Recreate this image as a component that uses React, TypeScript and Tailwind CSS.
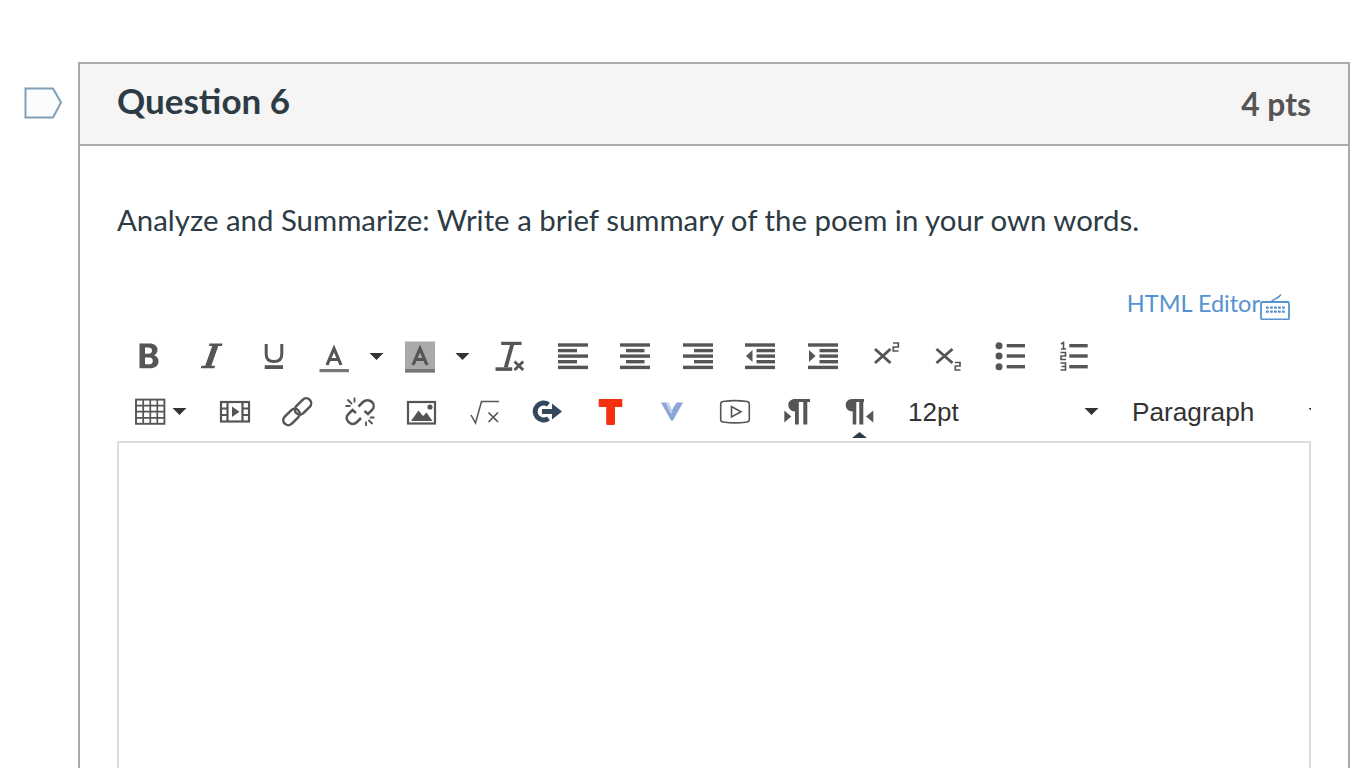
import type { ReactNode } from "react";

const G = "#555555";

function Ico({ children }: { children: ReactNode }) {
  return (
    <svg width="30" height="30" viewBox="0 0 30 30" fill="none" className="block overflow-visible shrink-0">
      {children}
    </svg>
  );
}

function Caret({ color = "#333333" }: { color?: string }) {
  return (
    <svg width="15" height="7" viewBox="0 0 15 7" className="block shrink-0">
      <path d="M0.5 0H14.5L7.5 7z" fill={color} />
    </svg>
  );
}

function Btn({ children, pointer }: { children: ReactNode; pointer?: boolean }) {
  return (
    <div className="relative flex w-[62.5px] shrink-0 items-center justify-center self-stretch">
      {children}
      {pointer && (
        <svg width="15" height="6" viewBox="0 0 15 6" className="absolute left-[23.5px] top-[47.5px] block">
          <path d="M7.5 0L15 6H0z" fill="#2d3b45" />
        </svg>
      )}
    </div>
  );
}

function ColorSplit({ children, wide }: { children: ReactNode; wide?: boolean }) {
  return (
    <div
      className={
        wide
          ? "flex w-[88px] shrink-0 items-center self-stretch pl-[13.5px]"
          : "flex w-[86.5px] shrink-0 items-center self-stretch pl-[14.5px]"
      }
    >
      {children}
      <div className="ml-[20px]">
        <Caret />
      </div>
    </div>
  );
}

function Bars({ rows }: { rows: [number, number][] }) {
  const ys = [2.3, 7.9, 13.4, 19, 24.7];
  return (
    <>
      {rows.map(([x, w], i) => (
        <rect key={i} x={x} y={ys[i]} width={w} height="3.4" fill={G} />
      ))}
    </>
  );
}

function ListDigit({ d }: { d: string }) {
  return <path d={d} stroke={G} strokeWidth="1.6" />;
}

function LetterA() {
  return <path d="M8 24L15 7.5L22 24M10.5 18.5H19.5" stroke={G} strokeWidth="3.2" />;
}

function Toolbar() {
  return (
    <div className="w-full overflow-hidden">
      <div className="flex h-[56px] items-center">
        <Btn>
          <Ico>
            <path
              fillRule="evenodd"
              d="M6.5 2.5H16.5C21.5 2.5 24.5 5 24.5 9C24.5 11.5 23 13.5 20.8 14.2C23.8 14.9 25.5 17.2 25.5 20.2C25.5 24.6 22 27.3 17 27.3H6.5zM12 6.5V12.8H15.5C17.7 12.8 19 11.7 19 9.6S17.7 6.5 15.5 6.5zM12 16.6V23.3H16C18.4 23.3 19.8 22.1 19.8 19.9S18.4 16.6 16 16.6z"
              fill={G}
            />
          </Ico>
        </Btn>
        <Btn>
          <Ico>
            <path d="M13.5 2.5H26.5L26 5H22.3L15.3 24.8H19L18.4 27.3H4.8L5.4 24.8H9.2L16.2 5H13z" fill={G} />
          </Ico>
        </Btn>
        <Btn>
          <Ico>
            <path d="M8.2 3V13C8.2 18 11 20.5 16 20.5S23.8 18 23.8 13V3" stroke={G} strokeWidth="3" />
            <rect x="6.7" y="24.2" width="18.3" height="3.8" fill={G} />
          </Ico>
        </Btn>
        <ColorSplit>
          <Ico>
            <LetterA />
            <rect x="0.5" y="28" width="29.5" height="3.2" fill="#777777" />
          </Ico>
        </ColorSplit>
        <ColorSplit wide>
          <Ico>
            <rect x="0" y="0.5" width="30" height="31" fill="#aaaaaa" />
            <rect x="0" y="28" width="30" height="3.5" fill="#777777" />
            <LetterA />
          </Ico>
        </ColorSplit>
        <Btn>
          <Ico>
            <path d="M6.2 0.7H26.5V4H6.2zM15 4H19L12.8 26.3H8.8z" fill={G} />
            <rect x="0.5" y="26.3" width="16.7" height="3.6" fill={G} />
            <path d="M19.5 20.4L28.2 29M28.2 20.4L19.5 29" stroke={G} strokeWidth="2.8" />
          </Ico>
        </Btn>
        <Btn>
          <Ico>
            <Bars rows={[[0, 30], [0, 19], [0, 30], [0, 19], [0, 30]]} />
          </Ico>
        </Btn>
        <Btn>
          <Ico>
            <Bars rows={[[0, 30], [6, 18.5], [0, 30], [6, 18.5], [0, 30]]} />
          </Ico>
        </Btn>
        <Btn>
          <Ico>
            <Bars rows={[[0, 30], [11, 19], [0, 30], [11, 19], [0, 30]]} />
          </Ico>
        </Btn>
        <Btn>
          <Ico>
            <Bars rows={[[0, 30], [11.5, 18.5], [11.5, 18.5], [11.5, 18.5], [0, 30]]} />
            <path d="M1 15L7.5 9V21z" fill={G} />
          </Ico>
        </Btn>
        <Btn>
          <Ico>
            <Bars rows={[[0, 30], [11.5, 18.5], [11.5, 18.5], [11.5, 18.5], [0, 30]]} />
            <path d="M7.5 15L1 9V21z" fill={G} />
          </Ico>
        </Btn>
        <Btn>
          <Ico>
            <path d="M5 8L20.5 22M20.5 8L5 22" stroke={G} strokeWidth="2.9" />
            <path d="M23 2H28.3V6H23.3V10H28.6" stroke={G} strokeWidth="1.7" />
          </Ico>
        </Btn>
        <Btn>
          <Ico>
            <path d="M3.5 8L19.5 22M19.5 8L3.5 22" stroke={G} strokeWidth="2.9" />
            <path d="M22 21.5H27V25H22.3V29H27.5" stroke={G} strokeWidth="1.7" />
          </Ico>
        </Btn>
        <Btn>
          <Ico>
            <circle cx="4" cy="4.7" r="3.5" fill={G} />
            <circle cx="4" cy="15" r="3.5" fill={G} />
            <circle cx="4" cy="25.7" r="3.5" fill={G} />
            <rect x="11.7" y="3" width="18.3" height="3.4" fill={G} />
            <rect x="11.7" y="13.3" width="18.3" height="3.4" fill={G} />
            <rect x="11.7" y="24" width="18.3" height="3.4" fill={G} />
          </Ico>
        </Btn>
        <Btn>
          <Ico>
            <ListDigit d="M3 3L5.5 1.5V8M3 8H8" />
            <ListDigit d="M2.5 11.5H7.5V15H3V18.5H8" />
            <ListDigit d="M2.5 22H7.5V29H2.5M3.5 25.5H7.5" />
            <rect x="11.3" y="3" width="18.4" height="3.4" fill={G} />
            <rect x="11.3" y="13.3" width="18.4" height="3.4" fill={G} />
            <rect x="11.3" y="24" width="18.4" height="3.4" fill={G} />
          </Ico>
        </Btn>
      </div>

      <div className="flex h-[55px] items-center">
        <div className="flex w-[86.5px] shrink-0 items-center self-stretch pl-[18px]">
          <Ico>
            <rect x="1" y="2.6" width="28.4" height="24.2" stroke={G} strokeWidth="1.9" />
            <path d="M1 8.6H29.5M1 14.7H29.5M1 20.8H29.5M8.2 2.4V27M15.3 2.4V27M22.3 2.4V27" stroke={G} strokeWidth="1.7" />
          </Ico>
          <div className="ml-[7px]">
            <Caret />
          </div>
        </div>
        <Btn>
          <Ico>
            <rect x="1" y="5" width="28" height="19.5" stroke={G} strokeWidth="2.2" />
            <path d="M7.5 5V24.5M22.5 5V24.5M1 11.5H7.5M1 18H7.5M22.5 11.5H29M22.5 18H29" stroke={G} strokeWidth="2.2" />
            <path d="M12 9.5L19.5 14.8L12 20z" fill={G} />
          </Ico>
        </Btn>
        <Btn>
          <Ico>
            <rect x="11.5" y="4.5" width="19" height="10" rx="5" transform="rotate(-45 21 9.5)" stroke={G} strokeWidth="2.5" />
            <rect x="0" y="15" width="19" height="10" rx="5" transform="rotate(-45 9.5 20)" stroke={G} strokeWidth="2.5" />
          </Ico>
        </Btn>
        <Btn>
          <Ico>
            <path d="M13.5 9.5L18 5C20.5 2.5 24.5 2.5 27 5C29.5 7.5 29 11 27 13L23 17L19.5 14" stroke={G} strokeWidth="2.5" />
            <path d="M16 21L12 25C9.5 27.5 5.5 27.5 3.5 25C1 22.5 1 19 3.5 17L7.5 13L11 16" stroke={G} strokeWidth="2.5" />
            <path d="M9.5 0.5V5.5M0.5 9H5.5M2.5 2.5L7 7M21 29V24.5M29.5 20.5H25M27.5 27L23.5 23" stroke={G} strokeWidth="1.8" />
          </Ico>
        </Btn>
        <Btn>
          <Ico>
            <rect x="1" y="5" width="27" height="21.5" stroke={G} strokeWidth="2.2" />
            <path d="M4 24L11.5 13.5L16 19L19.5 15.5L25.5 24z" fill={G} />
            <circle cx="23" cy="10" r="2.6" fill={G} />
          </Ico>
        </Btn>
        <Btn>
          <Ico>
            <path d="M1 18L5.5 26L11.5 4.5H29" stroke={G} strokeWidth="1.5" />
            <path d="M18.5 15.5L28 25M28 15.5L18.5 25" stroke={G} strokeWidth="1.7" />
          </Ico>
        </Btn>
        <Btn>
          <Ico>
            <path d="M16.5 7.5A8.5 8.5 0 1 0 16.5 21.5" stroke="#34495e" strokeWidth="5" />
            <rect x="10" y="12" width="12" height="5" fill="#34495e" />
            <path d="M20 6.5L30 14.5L20 22.5z" fill="#34495e" />
          </Ico>
        </Btn>
        <Btn>
          <Ico>
            <path d="M4.8 2H26.2C27 2 27.3 2.5 27.3 3.2V9C27.3 9.7 27 10 26.2 10H20V26.5C20 27.4 19.5 28 18.6 28H12.6C11.7 28 11.2 27.4 11.2 26.5V10H4.8C4 10 3.7 9.7 3.7 9V3.2C3.7 2.5 4 2 4.8 2z" fill="#f5300f" />
          </Ico>
        </Btn>
        <Btn>
          <Ico>
            <path d="M4 5.5H10.5L15 13L19.5 5.5H26L16 23.5H14z" fill="#8aa5d6" />
            <path d="M8.5 5.5H12L15.5 14.5L14 17z" fill="#c4d2eb" />
          </Ico>
        </Btn>
        <Btn>
          <Ico>
            <path
              d="M3 4.5C10 3.5 20 3.5 27 4.5C28.6 4.7 29.3 5.5 29.3 7V22.5C29.3 24 28.6 24.8 27 25C20 26 10 26 3 25C1.4 24.8 0.7 24 0.7 22.5V7C0.7 5.5 1.4 4.7 3 4.5z"
              stroke={G}
              strokeWidth="1.6"
            />
            <path d="M11.5 9.5V20L21 14.8z" stroke={G} strokeWidth="1.6" />
          </Ico>
        </Btn>
        <Btn>
          <Ico>
            <path d="M13 2H28V5H25.3V27.5H21.3V5H16.8V27.5H13V14.5C9 14.5 6.3 11.5 6.3 8S9 2 13 2z" fill={G} />
            <path d="M2.3 13.5L9.3 19.5L2.3 25.5z" fill={G} />
          </Ico>
        </Btn>
        <Btn pointer>
          <Ico>
            <path d="M7 2H19V5H18.3V27.5H14.3V5H11.3V27.5H7.7V14.5C3 14.5 0.7 11 0.7 8S3 2 7 2z" fill={G} />
            <path d="M28.3 13.5V25.5L21 19.5z" fill={G} />
          </Ico>
        </Btn>
        <div className="flex w-[224px] shrink-0 items-center pl-[17px] pr-[16px] font-['Liberation_Sans',sans-serif] text-[26px] text-[#333333]">
          <span className="mt-[2px] flex-1">12pt</span>
          <Caret />
        </div>
        <div className="flex shrink-0 items-center pl-[17px] font-['Liberation_Sans',sans-serif] text-[26.2px] text-[#333333]">
          <span className="mt-[2px] w-[176px]">Paragraph</span>
          <Caret />
        </div>
      </div>
    </div>
  );
}

export default function App() {
  return (
    <div className="flex h-screen overflow-hidden bg-white pt-[62px] font-['Lato',sans-serif]">
      <div className="w-[78px] shrink-0 pl-[24px] pt-[25px]">
        <svg width="39" height="32" viewBox="0 0 39 32" className="block">
          <path d="M1.5 1.5H29L37 15.5L29 30.5H1.5z" fill="#fbfcfd" stroke="#7f9fb6" strokeWidth="2" />
        </svg>
      </div>

      <div className="h-[900px] w-[1272px] shrink-0 border-2 border-[#aaaaaa]">
        <div className="flex h-[82px] items-center justify-between border-b-2 border-[#aaaaaa] bg-[#f5f5f5] pl-[37px] pr-[37px]">
          <h2 className="mb-[8px] text-[35px] font-bold text-[#2d3b45]">Question 6</h2>
          <div className="mt-[2px] text-[31.8px] font-bold text-[#555555]">4 pts</div>
        </div>

        <div className="px-[37px]">
          <p className="pt-[54px] text-[29.4px] leading-[40px] text-[#2d3b45]">
            Analyze and Summarize: Write a brief summary of the poem in your own words.
          </p>

          <div className="mt-[46px] flex h-[42px] items-start justify-end pr-[21px]">
            <span className="text-[23.5px] leading-[34px] text-[#5593d0]">HTML Editor</span>
            <svg width="30" height="26" viewBox="0 0 30 26" className="mt-[8px] block">
              <rect x="1" y="8" width="28" height="17.5" rx="1.5" fill="none" stroke="#5593d0" strokeWidth="1.8" />
              <path d="M11 8C13 5 18 5 21 0.5" fill="none" stroke="#5593d0" strokeWidth="1.5" />
              <path
                d="M6 12.5h2.8v2.2H6zM10 12.5h2.8v2.2H10zM14 12.5h2.8v2.2H14zM18 12.5h2.8v2.2H18zM22 12.5h2.8v2.2H22zM6 16.5h2.8v2.2H6zM10 16.5h2.8v2.2H10zM14 16.5h2.8v2.2H14zM18 16.5h2.8v2.2H18zM22 16.5h2.8v2.2H22z"
                fill="#5593d0"
              />
            </svg>
          </div>

          <Toolbar />

          <div className="mt-[2px] h-[500px] border-2 border-[#dddddd]" />
        </div>
      </div>
    </div>
  );
}
